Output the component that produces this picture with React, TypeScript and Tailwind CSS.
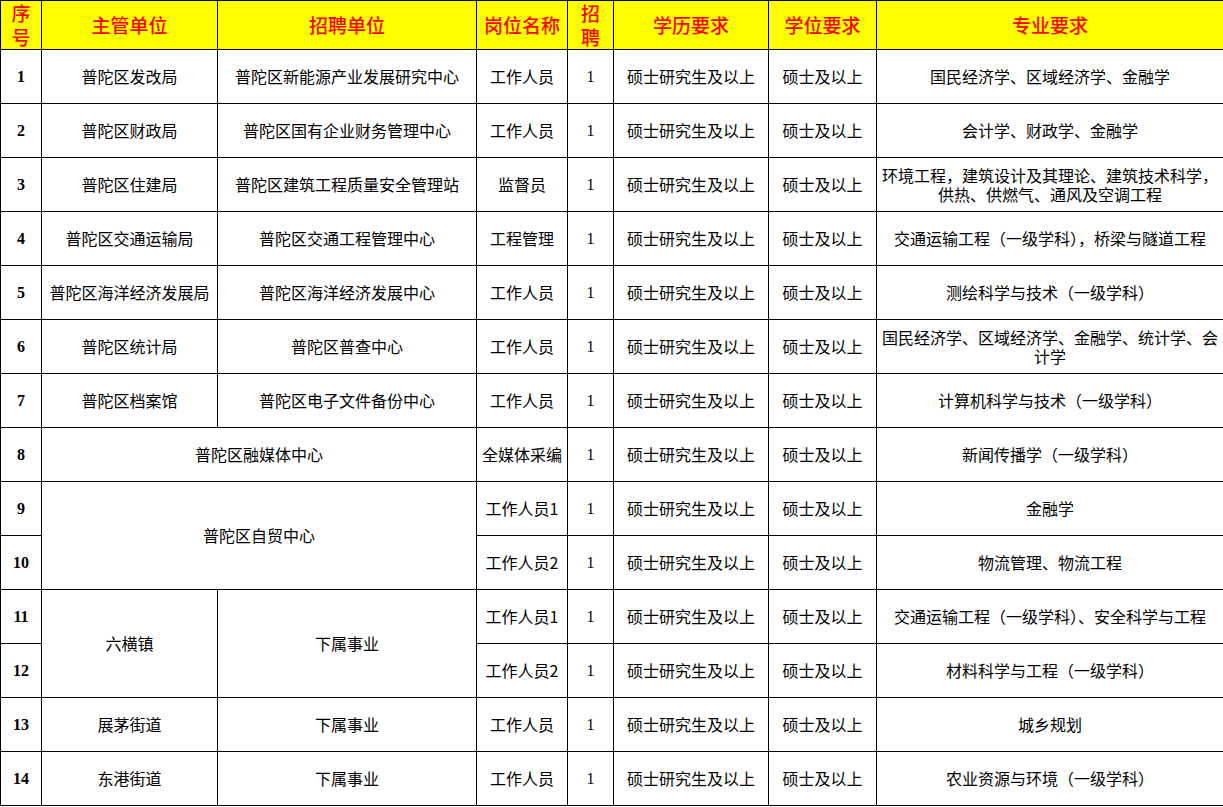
const CJK = "font-['Noto_Sans_CJK_SC',sans-serif]";

type Row = {
  no: number;
  unit?: { text: string; rowSpan?: number; colSpan?: number };
  org?: { text: string; rowSpan?: number };
  post: string;
  major: string;
};

const ROWS: Row[] = [
  { no: 1, unit: { text: '普陀区发改局' }, org: { text: '普陀区新能源产业发展研究中心' }, post: '工作人员', major: '国民经济学、区域经济学、金融学' },
  { no: 2, unit: { text: '普陀区财政局' }, org: { text: '普陀区国有企业财务管理中心' }, post: '工作人员', major: '会计学、财政学、金融学' },
  { no: 3, unit: { text: '普陀区住建局' }, org: { text: '普陀区建筑工程质量安全管理站' }, post: '监督员', major: '环境工程，建筑设计及其理论、建筑技术科学，供热、供燃气、通风及空调工程' },
  { no: 4, unit: { text: '普陀区交通运输局' }, org: { text: '普陀区交通工程管理中心' }, post: '工程管理', major: '交通运输工程（一级学科），桥梁与隧道工程' },
  { no: 5, unit: { text: '普陀区海洋经济发展局' }, org: { text: '普陀区海洋经济发展中心' }, post: '工作人员', major: '测绘科学与技术（一级学科）' },
  { no: 6, unit: { text: '普陀区统计局' }, org: { text: '普陀区普查中心' }, post: '工作人员', major: '国民经济学、区域经济学、金融学、统计学、会计学' },
  { no: 7, unit: { text: '普陀区档案馆' }, org: { text: '普陀区电子文件备份中心' }, post: '工作人员', major: '计算机科学与技术（一级学科）' },
  { no: 8, unit: { text: '普陀区融媒体中心', colSpan: 2 }, post: '全媒体采编', major: '新闻传播学（一级学科）' },
  { no: 9, unit: { text: '普陀区自贸中心', colSpan: 2, rowSpan: 2 }, post: '工作人员1', major: '金融学' },
  { no: 10, post: '工作人员2', major: '物流管理、物流工程' },
  { no: 11, unit: { text: '六横镇', rowSpan: 2 }, org: { text: '下属事业', rowSpan: 2 }, post: '工作人员1', major: '交通运输工程（一级学科）、安全科学与工程' },
  { no: 12, post: '工作人员2', major: '材料科学与工程（一级学科）' },
  { no: 13, unit: { text: '展茅街道' }, org: { text: '下属事业' }, post: '工作人员', major: '城乡规划' },
  { no: 14, unit: { text: '东港街道' }, org: { text: '下属事业' }, post: '工作人员', major: '农业资源与环境（一级学科）' },
];

const td = 'border border-black text-center align-middle p-0';
const head = `${td} bg-[#ffff00] text-[#ff0000] text-[19px] leading-[24px] font-medium`;

export default function App() {
  return (
    <div className={`w-[1223px] h-[807px] bg-white ${CJK}`}>
      <table className="w-[1223px] table-fixed border-collapse text-black text-[16px] leading-[19px]">
        <colgroup>
          <col className="w-[41px]" />
          <col className="w-[176px]" />
          <col className="w-[259px]" />
          <col className="w-[91px]" />
          <col className="w-[46px]" />
          <col className="w-[155px]" />
          <col className="w-[108px]" />
          <col className="w-[347px]" />
        </colgroup>
        <thead>
          <tr className="h-[49px]">
            <th className={head}>序<br />号</th>
            <th className={head}>主管单位</th>
            <th className={head}>招聘单位</th>
            <th className={head}>岗位名称</th>
            <th className={head}>招<br />聘</th>
            <th className={head}>学历要求</th>
            <th className={head}>学位要求</th>
            <th className={head}>专业要求</th>
          </tr>
        </thead>
        <tbody>
          {ROWS.map((r) => (
            <tr key={r.no} className="h-[54px]">
              <td className={`${td} font-['Liberation_Serif',serif] font-bold text-[16px]`}>{r.no}</td>
              {r.unit && (
                <td className={td} colSpan={r.unit.colSpan} rowSpan={r.unit.rowSpan}>
                  {r.unit.text}
                </td>
              )}
              {r.org && (
                <td className={td} rowSpan={r.org.rowSpan}>
                  {r.org.text}
                </td>
              )}
              <td className={td}>{r.post}</td>
              <td className={`${td} font-['Liberation_Serif',serif] text-[16px]`}>1</td>
              <td className={td}>硕士研究生及以上</td>
              <td className={td}>硕士及以上</td>
              <td className={`${td} px-[3px]`}>{r.major}</td>
            </tr>
          ))}
        </tbody>
      </table>
    </div>
  );
}
